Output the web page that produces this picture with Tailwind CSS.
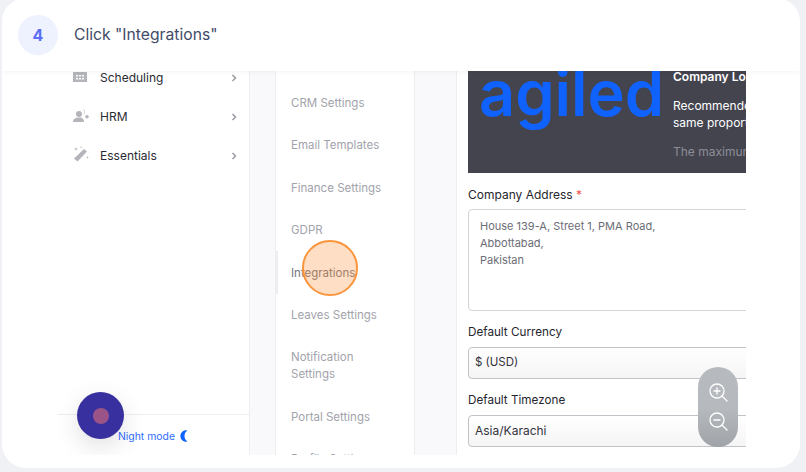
<!DOCTYPE html>
<html lang="en">

<head>
    <meta charset="UTF-8" />
    <title>Click Integrations</title>
    <script src="https://cdn.jsdelivr.net/npm/@tailwindcss/browser@4"></script>
</head>

<body class="w-[806px] h-[472px] overflow-hidden bg-[#f0f1f5] font-['Inter',sans-serif]">
    <div class="relative w-[798px] h-[470px] ml-[2px] -mt-[2px] bg-white rounded-[24px] overflow-hidden">
        <!-- Step header -->
        <div class="relative z-20 flex items-center gap-4 h-[73px] pl-4 bg-white shadow-[0_1px_5px_rgba(0,0,0,0.05)]">
            <div class="flex items-center justify-center w-10 h-10 mt-[1px] rounded-full bg-[#eef1fe] text-[#5b6ef5] text-[16px] font-bold">4</div>
            <p class="mt-[1px] text-[15.700px] text-[#3f4b68]">Click "Integrations"</p>
        </div>

        <!-- Screenshot of the app -->
        <div class="relative flex w-[688px] h-[384px] ml-[56px] overflow-hidden rounded-b-[10px] bg-[#f9f9fb]">
            <!-- Sidebar -->
            <aside class="flex flex-col justify-between w-[192px] shrink-0 bg-white border-r border-[#eeeef1]">
                <ul class="-mt-[13px] pl-[15px] pr-[12px] text-[12px] text-[#2b2b33]">
                    <li class="flex items-center h-[39px]">
                        <svg class="w-[14px] h-[10px] mr-[13px] -mt-[1px]" viewBox="0 0 14 10" fill="#b4b5ba"><path d="M0 0h14v10H0z" /><path fill="#fff" d="M3 3h2v1.500H3zM6 3h2v1.500H6zM9 3h2v1.500H9zM3 6h2v1.500H3zM6 6h2v1.500H6zM9 6h2v1.500H9z" /></svg>
                        <span class="flex-1">Scheduling</span>
                        <svg class="w-[6px] h-[8px]" viewBox="0 0 6 8" fill="none" stroke="#9b9ca3" stroke-width="1.500"><path d="M1.500 1l3 3-3 3" /></svg>
                    </li>
                    <li class="flex items-center h-[39px]">
                        <svg class="w-[16px] h-[15px] mr-[11px] -mt-[3px]" viewBox="0 0 16 15" fill="#b4b5ba"><circle cx="6" cy="6" r="3" /><path d="M9.500 1a3.500 3.500 0 0 1 .500 6.500 4 4 0 0 0-.500-6.500zM0 14c0-3 2-4.500 6-4.500s5 1.500 5 4.500zM14 7a1.800 1.800 0 1 1 0 3.600A1.800 1.800 0 0 1 14 7z" /></svg>
                        <span class="flex-1">HRM</span>
                        <svg class="w-[6px] h-[8px]" viewBox="0 0 6 8" fill="none" stroke="#9b9ca3" stroke-width="1.500"><path d="M1.500 1l3 3-3 3" /></svg>
                    </li>
                    <li class="flex items-center h-[39px]">
                        <svg class="w-[16px] h-[16px] mr-[11px] -mt-[3px]" viewBox="0 0 16 16" fill="#b4b5ba"><path d="M11 3l3 2.500L4.500 15.500 1 12.500z" /><path d="M3 1l.500 1.500L5 3l-1.500.500L3 5l-.500-1.500L1 3l1.500-.500zM8 0l.300 1 1 .300-1 .300L8 2.600l-.300-1-1-.300 1-.300zM14.500 10l.400 1 1 .400-1 .400-.400 1-.400-1-1-.400 1-.400z" /></svg>
                        <span class="flex-1">Essentials</span>
                        <svg class="w-[6px] h-[8px]" viewBox="0 0 6 8" fill="none" stroke="#9b9ca3" stroke-width="1.500"><path d="M1.500 1l3 3-3 3" /></svg>
                    </li>
                </ul>
                <div class="flex items-center gap-[4px] h-[41px] pl-[60px] border-t border-[#eeeef1] text-[10.400px] text-[#2f6dff]">
                    <span class="mt-[4px]">Night mode</span>
                    <svg class="w-[10px] h-[12px] mt-[2px]" viewBox="0 0 10 12" fill="#0f62fe"><path d="M8.500 0.500A5.700 5.700 0 1 0 8.500 11.500 6.500 6.500 0 0 1 8.500 0.500z" /></svg>
                </div>
            </aside>

            <!-- Settings menu -->
            <nav class="relative w-[140px] ml-[25px] shrink-0 bg-white border-x border-[#eeeef1]">
                <ul class="flex flex-col gap-[25.400px] pt-[24px] pl-[15px] pr-[20px] text-[11.500px] leading-[17px] text-[#a2a3ab]">
                    <li>CRM Settings</li>
                    <li class="whitespace-nowrap">Email Templates</li>
                    <li>Finance Settings</li>
                    <li>GDPR</li>
                    <li class="text-[#74757e]">Integrations</li>
                    <li>Leaves Settings</li>
                    <li class="w-[90px]">Notification Settings</li>
                    <li>Portal Settings</li>
                    <li>Profile Settings</li>
                </ul>
                <div class="absolute -left-px top-[180px] w-[3px] h-[43px] bg-[#eeeef2]"></div>
            </nav>

            <!-- Company form -->
            <section class="flex-1 min-w-0 ml-[41px] pl-[11px] bg-white border-l border-[#eeeef1] overflow-hidden">
                <div class="flex w-[280px] h-[102px] overflow-hidden bg-[#44444f]">
                    <div class="w-[205px] shrink-0 pl-[11px] -mt-[23px] text-[#0f62fe] text-[63px] font-semibold leading-[90px]">agiled</div>
                    <div class="w-[75px] shrink-0 text-[12px] text-white overflow-hidden">
                        <p class="font-semibold leading-[17px] mt-[-3px] whitespace-nowrap">Company Logo</p>
                        <p class="mt-[12px] leading-[17px] whitespace-nowrap">Recommended size<br />same proportion</p>
                        <p class="mt-[12px] leading-[17px] text-[#8d8d97] whitespace-nowrap">The maximum</p>
                    </div>
                </div>
                <label class="block mt-[13px] text-[12px] leading-[17px] text-[#26262e]">Company Address <span class="text-[#f0524f]">*</span></label>
                <div class="w-[340px] h-[102px] mt-[6px] pt-[8px] pl-[11px] border border-[#d3d4d8] rounded-[4px] text-[11px] leading-[17px] text-[#6c6d75]">House 139-A, Street 1, PMA Road,<br />Abbottabad,<br />Pakistan</div>
                <label class="block mt-[13px] text-[11.700px] leading-[17px] text-[#26262e]">Default Currency</label>
                <div class="flex items-center w-[340px] h-[32px] mt-[6px] pl-[6px] border border-[#c2c3c8] rounded-[4px] bg-gradient-to-b from-white to-[#f5f5f6] text-[11.500px] text-[#33333b]">$ (USD)</div>
                <label class="block mt-[13px] text-[11.700px] leading-[17px] text-[#26262e]">Default Timezone</label>
                <div class="flex items-center w-[340px] h-[32px] mt-[6px] pl-[6px] border border-[#c2c3c8] rounded-[4px] bg-gradient-to-b from-white to-[#f5f5f6] text-[12px] text-[#33333b]">Asia/Karachi</div>
            </section>

            <!-- Zoom controls -->
            <div class="absolute left-[640px] top-[296px] flex flex-col items-center justify-center gap-[10px] w-10 h-20 rounded-full bg-gradient-to-b from-[#b6b9be] via-[#b6b9be] to-[#a0a3a8]">
                <svg class="w-[19px] h-[19px]" viewBox="0 0 19 19" fill="none" stroke="#fff" stroke-width="1.300" stroke-linecap="round"><circle cx="8" cy="8" r="7" /><path d="M13 13l5 5M8 5v6M5 8h6" /></svg>
                <svg class="w-[19px] h-[19px]" viewBox="0 0 19 19" fill="none" stroke="#fff" stroke-width="1.300" stroke-linecap="round"><circle cx="8" cy="8" r="7" /><path d="M13 13l5 5M5 8h6" /></svg>
            </div>

            <!-- Click highlight -->
            <div class="absolute left-[244px] top-[169px] w-[56px] h-[56px] rounded-full border-2 border-[#f9953c] bg-[#fb923c]/30"></div>

            <!-- Chat launcher -->
            <div class="absolute left-[19px] top-[321px] flex items-center justify-center w-[47px] h-[47px] rounded-full bg-[#39309f] shadow-[0_8px_24px_rgba(0,0,0,0.12)]">
                <div class="w-4 h-4 rounded-full bg-[#9b5488]"></div>
            </div>
        </div>
    </div>
</body>

</html>
